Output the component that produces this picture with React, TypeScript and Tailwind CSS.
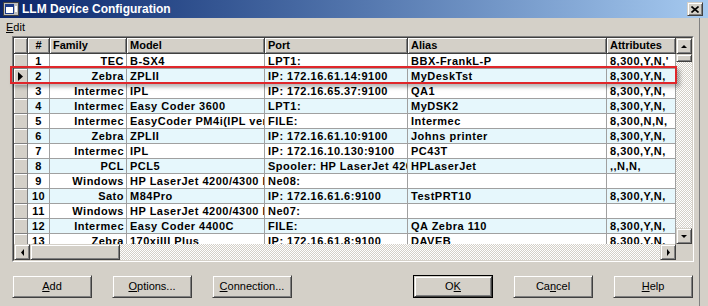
const cols = "grid grid-cols-[14px_22px_77px_138px_143px_199px_69px]";

const rows = [
  ["1", "TEC", "B-SX4", "LPT1:", "BBX-FrankL-P", "8,300,Y,N,'"],
  ["2", "Zebra", "ZPLII", "IP: 172.16.61.14:9100", "MyDeskTst", "8,300,Y,N,"],
  ["3", "Intermec", "IPL", "IP: 172.16.65.37:9100", "QA1", "8,300,Y,N,"],
  ["4", "Intermec", "Easy Coder 3600", "LPT1:", "MyDSK2", "8,300,Y,N,"],
  ["5", "Intermec", "EasyCoder PM4i(IPL version)", "FILE:", "Intermec", "8,300,N,N,"],
  ["6", "Zebra", "ZPLII", "IP: 172.16.61.10:9100", "Johns printer", "8,300,Y,N,"],
  ["7", "Intermec", "IPL", "IP: 172.16.10.130:9100", "PC43T", "8,300,Y,N,"],
  ["8", "PCL", "PCL5", "Spooler: HP LaserJet 4200 PCL 6", "HPLaserJet", ",,N,N,"],
  ["9", "Windows", "HP LaserJet 4200/4300 PCL 6", "Ne08:", "", ""],
  ["10", "Sato", "M84Pro", "IP: 172.16.61.6:9100", "TestPRT10", "8,300,Y,N,"],
  ["11", "Windows", "HP LaserJet 4200/4300 PCL 6", "Ne07:", "", ""],
  ["12", "Intermec", "Easy Coder 4400C", "FILE:", "QA Zebra 110", "8,300,Y,N,"],
  ["13", "Zebra", "170xiIII Plus", "IP: 172.16.61.8:9100", "DAVEB", "8,300,Y,N,"],
];

const raised =
  "bg-[#d4d0c8] border border-t-[#d4d0c8] border-l-[#d4d0c8] border-r-[#404040] border-b-[#404040] shadow-[inset_1px_1px_0_#fff,inset_-1px_-1px_0_#808080]";
const track =
  "bg-[image:repeating-conic-gradient(#d4d0c8_0%_25%,#ffffff_0%_50%)] bg-[length:2px_2px]";

function Arrow({ dir }: { dir: "up" | "down" | "left" | "right" }) {
  const pts = {
    up: "4,1 1,4 7,4",
    down: "1,1 7,1 4,4",
    left: "4,0 4,7 1,3.5",
    right: "1,0 1,7 4,3.5",
  }[dir];
  const vertical = dir === "up" || dir === "down";
  return (
    <svg width={vertical ? 8 : 5} height={vertical ? 5 : 7} viewBox={vertical ? "0 0 8 5" : "0 0 5 7"}>
      <polygon points={pts} fill="#000" />
    </svg>
  );
}

function ScrollBtn({ dir }: { dir: "up" | "down" | "left" | "right" }) {
  return (
    <div className={`${raised} w-[16px] h-[16px] flex items-center justify-center shrink-0`}>
      <Arrow dir={dir} />
    </div>
  );
}

function Btn({ label, k, def }: { label: string; k: number; def?: boolean }) {
  const inner = (
    <div className={`${raised} w-full h-full flex items-center justify-center text-[11px] text-black`}>
      <span>
        {label.slice(0, k)}
        <span className="underline underline-offset-[1px]">{label[k]}</span>
        {label.slice(k + 1)}
      </span>
    </div>
  );
  if (def) return <div className="w-[80px] h-[23px] border border-black">{inner}</div>;
  return <div className="w-[80px] h-[23px]">{inner}</div>;
}

const headCell =
  "bg-[#d4d0c8] border-r border-b border-[#404040] shadow-[inset_1px_1px_0_#fff,inset_-1px_-1px_0_#808080] font-bold text-[11px] leading-[15px] px-[3px] overflow-hidden whitespace-nowrap";
const cell =
  "border-r border-b border-[#a0a0a0] overflow-hidden whitespace-nowrap leading-[14px] font-bold text-[11px] tracking-[0.5px]";

export default function App() {
  return (
    <div
      className="relative w-[708px] h-[306px] overflow-hidden bg-[#d4d0c8] text-black"
      style={{ fontFamily: '"Liberation Sans", Arial, sans-serif' }}
    >
      {/* title bar */}
      <div className="h-[18px] bg-linear-to-r from-[#0a246a] to-[#a6caf0] flex items-center pl-[3px] pr-[5px]">
        <svg width="16" height="14" viewBox="0 0 16 14" className="shrink-0">
          <rect x="0.5" y="0.5" width="15" height="13" fill="#c0c0c0" stroke="#404040" />
          <rect x="2" y="2" width="9" height="10" fill="#1a3a8a" />
          <rect x="3" y="5" width="7" height="6" fill="#ffffff" />
          <rect x="12" y="4" width="2" height="6" fill="#ffffff" />
        </svg>
        <span className="ml-[3px] text-white font-bold text-[12px] leading-none">LLM Device Configuration</span>
        <div className={`${raised} ml-auto w-[16px] h-[14px] flex items-center justify-center`}>
          <svg width="8" height="7" viewBox="0 0 8 7">
            <path d="M0.5 0.5 L7.5 6.5 M7.5 0.5 L0.5 6.5" stroke="#000" strokeWidth="1.6" />
          </svg>
        </div>
      </div>

      <div className="flex">
        <div className="w-[700px] border-r border-[#808080]">
          {/* menu */}
          <div className="h-[18px] flex items-center pl-[6px] text-[11px]">
            <span>
              <span className="underline underline-offset-[1px]">E</span>dit
            </span>
          </div>

          {/* grid */}
          <div className="ml-[12px] w-[682px] h-[226px] border border-t-[#808080] border-l-[#808080] border-b-white border-r-white">
            <div className="w-full h-full border border-t-[#404040] border-l-[#404040] border-b-[#d4d0c8] border-r-[#d4d0c8] flex flex-col">
              <div className="flex h-[206px]">
                <div className="w-[662px] h-[206px] overflow-hidden bg-white">
                  <div className={`${cols} h-[16px]`}>
                    <div className={headCell}></div>
                    <div className={`${headCell} text-center`}>#</div>
                    <div className={headCell}>Family</div>
                    <div className={headCell}>Model</div>
                    <div className={headCell}>Port</div>
                    <div className={headCell}>Alias</div>
                    <div className={headCell}>Attributes</div>
                  </div>
                  {rows.map((r, i) => (
                    <div key={r[0]} className={`${cols} h-[15px] ${i % 2 === 0 ? "bg-white" : "bg-[#e6f7fc]"}`}>
                      <div className="bg-[#d4d0c8] border-r border-b border-[#808080] shadow-[inset_1px_1px_0_#fff] flex items-center justify-center">
                        {i === 1 && (
                          <svg width="5" height="9" viewBox="0 0 5 9">
                            <polygon points="0,0 5,4.5 0,9" fill="#000" />
                          </svg>
                        )}
                      </div>
                      <div className={`${cell} text-center`}>{r[0]}</div>
                      <div className={`${cell} text-right pr-[2px]`}>{r[1]}</div>
                      <div className={`${cell} pl-[3px]`}>{r[2]}</div>
                      <div className={`${cell} pl-[3px]`}>{r[3]}</div>
                      <div className={`${cell} pl-[3px]`}>{r[4]}</div>
                      <div className={`${cell} pl-[3px]`}>{r[5]}</div>
                    </div>
                  ))}
                </div>
                {/* vertical scrollbar */}
                <div className="w-[16px] h-[206px] flex flex-col">
                  <ScrollBtn dir="up" />
                  <div className={`${raised} w-[16px] h-[8px]`}></div>
                  <div className={`flex-1 ${track}`}></div>
                  <ScrollBtn dir="down" />
                </div>
              </div>
              {/* horizontal scrollbar */}
              <div className="flex h-[16px]">
                <div className="w-[662px] h-[16px] flex">
                  <ScrollBtn dir="left" />
                  <div className={`${raised} w-[90px] h-[16px]`}></div>
                  <div className={`flex-1 ${track}`}></div>
                  <ScrollBtn dir="right" />
                </div>
                <div className="w-[16px] h-[16px] bg-[#d4d0c8]"></div>
              </div>
            </div>
          </div>

          {/* buttons */}
          <div className="mt-[13px] h-[44px] flex pl-[12px] pr-[6px]">
            <div className="flex gap-[20px]">
              <Btn label="Add" k={0} />
              <Btn label="Options..." k={0} />
              <Btn label="Connection..." k={0} />
            </div>
            <div className="ml-auto flex gap-[20px]">
              <Btn label="OK" k={1} def />
              <Btn label="Cancel" k={2} />
              <Btn label="Help" k={0} />
            </div>
          </div>
        </div>
      </div>

      {/* highlight annotation */}
      <div className="absolute left-[10px] top-[66px] w-[667px] h-[18px] border-2 border-[#e0262a] shadow-[3px_3px_4px_rgba(0,0,0,0.3)]"></div>
    </div>
  );
}
